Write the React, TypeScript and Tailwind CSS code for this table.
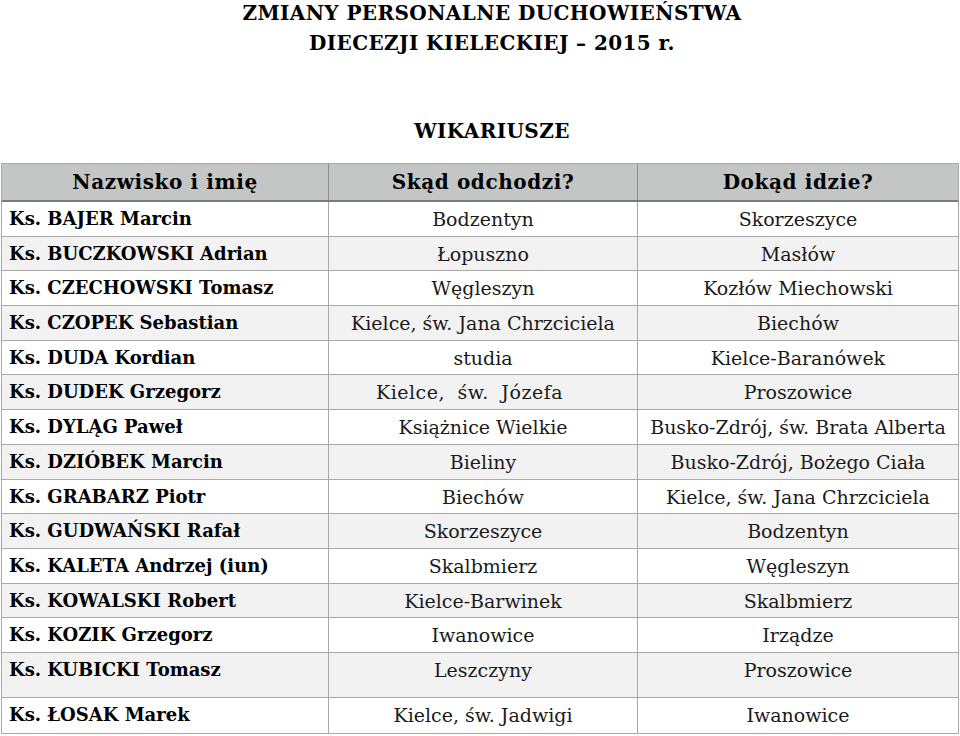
import React from "react";

const rows: [string, string, string][] = [
  ["Ks. BAJER Marcin", "Bodzentyn", "Skorzeszyce"],
  ["Ks. BUCZKOWSKI Adrian", "Łopuszno", "Masłów"],
  ["Ks. CZECHOWSKI Tomasz", "Węgleszyn", "Kozłów Miechowski"],
  ["Ks. CZOPEK Sebastian", "Kielce, św. Jana Chrzciciela", "Biechów"],
  ["Ks. DUDA Kordian", "studia", "Kielce-Baranówek"],
  ["Ks. DUDEK Grzegorz", "Kielce, św. Józefa", "Proszowice"],
  ["Ks. DYLĄG Paweł", "Książnice Wielkie", "Busko-Zdrój, św. Brata Alberta"],
  ["Ks. DZIÓBEK Marcin", "Bieliny", "Busko-Zdrój, Bożego Ciała"],
  ["Ks. GRABARZ Piotr", "Biechów", "Kielce, św. Jana Chrzciciela"],
  ["Ks. GUDWAŃSKI Rafał", "Skorzeszyce", "Bodzentyn"],
  ["Ks. KALETA Andrzej (iun)", "Skalbmierz", "Węgleszyn"],
  ["Ks. KOWALSKI Robert", "Kielce-Barwinek", "Skalbmierz"],
  ["Ks. KOZIK Grzegorz", "Iwanowice", "Irządze"],
  ["Ks. KUBICKI Tomasz", "Leszczyny", "Proszowice"],
  ["Ks. ŁOSAK Marek", "Kielce, św. Jadwigi", "Iwanowice"],
];

const serif = { fontFamily: '"DejaVu Serif", serif' };

export default function App() {
  return (
    <div className="w-[960px] h-[736px] bg-white overflow-hidden text-black" style={serif}>
      <div className="mt-[-2px] pl-[24px] text-center font-bold text-[20px] leading-[30px] tracking-[0.4px]">
        <div>ZMIANY PERSONALNE DUCHOWIEŃSTWA</div>
        <div>DIECEZJI KIELECKIEJ – 2015 r.</div>
        <div className="mt-[58px]">WIKARIUSZE</div>
      </div>
      <div className="mt-[17px] ml-[1px] w-[958px] border border-[#a8a8a8]">
        <div className="grid grid-cols-[327px_309px_320px] h-[38px] bg-[#c4c6c6] border-b-2 border-[#7a7a7a] font-bold text-[20px] tracking-[0.6px]">
          <div className="flex items-center justify-center border-r border-[#8c8c8c]">
            Nazwisko i imię
          </div>
          <div className="flex items-center justify-center border-r border-[#8c8c8c]">
            Skąd odchodzi?
          </div>
          <div className="flex items-center justify-center">Dokąd idzie?</div>
        </div>
        {rows.map((r, i) => {
          const tall = i === 13;
          const last = i === rows.length - 1;
          return (
            <div
              key={i}
              className={
                "grid grid-cols-[327px_309px_320px] leading-[34px] " +
                (i % 2 === 1 ? "bg-[#f2f2f2] " : "bg-white ") +
                (last ? "" : "border-b border-[#a8a8a8] ") +
                (tall ? "h-[45px]" : "h-[34.7px]")
              }
            >
              <div className="pl-[7px] font-bold text-[18px] border-r border-[#a8a8a8] whitespace-nowrap">
                {r[0]}
              </div>
              <div
                className={
                  "text-center text-[19px] text-[#1a1a1a] border-r border-[#a8a8a8] whitespace-nowrap " +
                  (i === 5 ? "pr-[27px] [word-spacing:6px] tracking-[0.5px]" : "")
                }
              >
                {r[1]}
              </div>
              <div className="text-center text-[19px] text-[#1a1a1a] whitespace-nowrap">{r[2]}</div>
            </div>
          );
        })}
      </div>
    </div>
  );
}
